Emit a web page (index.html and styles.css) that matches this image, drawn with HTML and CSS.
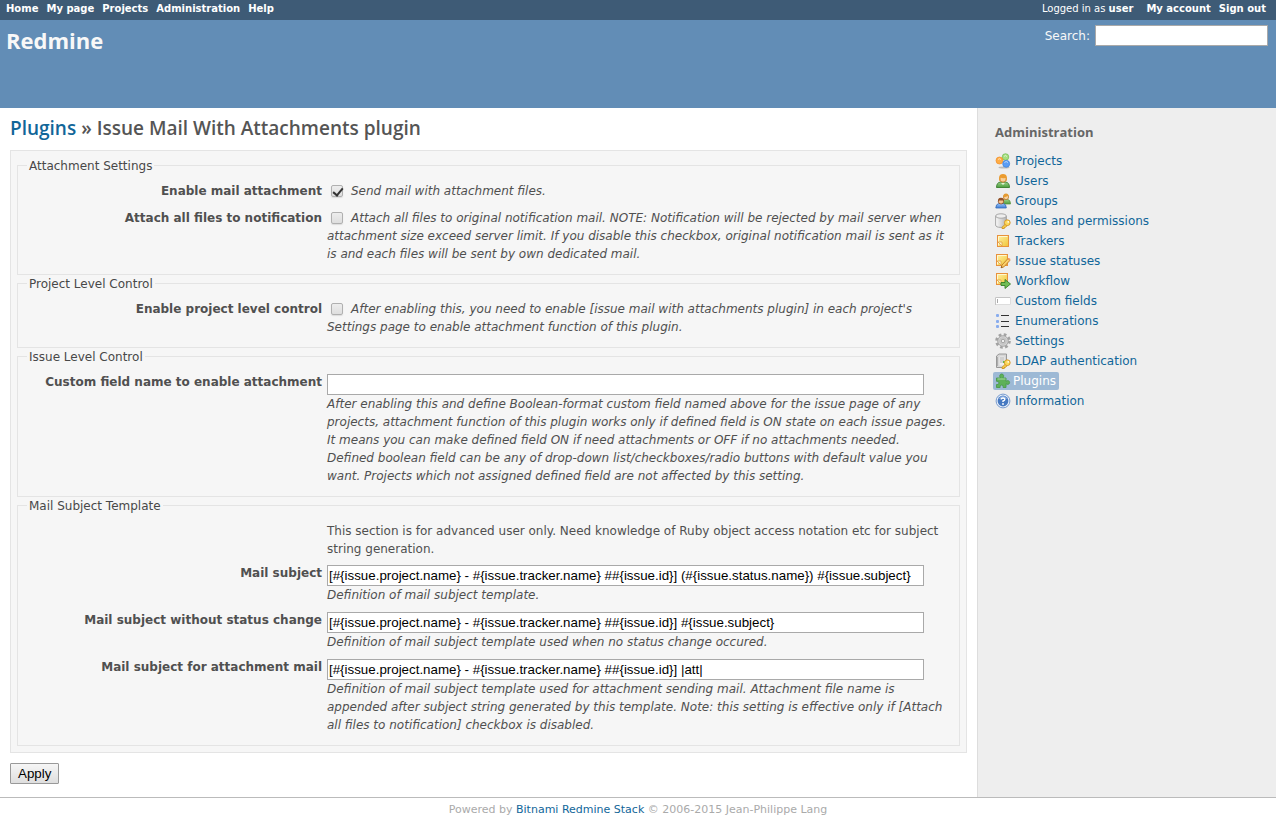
FILE: index.html
```html
<!DOCTYPE html>
<html lang="en">
<head>
<meta charset="utf-8">
<title>Issue Mail With Attachments plugin - Redmine</title>
<link rel="stylesheet" href="styles.css">
</head>
<body>
<nav class="top-menu">
  <ul class="menu">
    <li><a href="#">Home</a></li>
    <li><a href="#">My page</a></li>
    <li><a href="#">Projects</a></li>
    <li><a href="#">Administration</a></li>
    <li><a href="#">Help</a></li>
  </ul>
  <div class="account">
    <span class="logged">Logged in as <a href="#">user</a></span>
    <ul class="menu">
      <li><a href="#">My account</a></li>
      <li><a href="#">Sign out</a></li>
    </ul>
  </div>
</nav>
<header class="header">
  <h1>Redmine</h1>
  <form class="search">
    <label for="q">Search:</label>
    <input type="text" id="q">
  </form>
</header>
<div class="main">
  <main class="content">
    <h2><a href="#">Plugins</a> » Issue Mail With Attachments plugin</h2>
    <form>
      <div class="box">
        <fieldset>
          <legend>Attachment Settings</legend>
          <div class="row">
            <label for="enable-mail">Enable mail attachment</label>
            <p class="hint"><input type="checkbox" id="enable-mail" checked>Send mail with attachment files.</p>
          </div>
          <div class="row">
            <label for="attach-all">Attach all files to notification</label>
            <p class="hint"><input type="checkbox" id="attach-all">Attach all files to original notification mail. NOTE: Notification will be rejected by mail server when attachment size exceed server limit. If you disable this checkbox, original notification mail is sent as it is and each files will be sent by own dedicated mail.</p>
          </div>
        </fieldset>
        <fieldset>
          <legend>Project Level Control</legend>
          <div class="row">
            <label for="project-level">Enable project level control</label>
            <p class="hint"><input type="checkbox" id="project-level">After enabling this, you need to enable [issue mail with attachments plugin] in each project's Settings page to enable attachment function of this plugin.</p>
          </div>
        </fieldset>
        <fieldset>
          <legend>Issue Level Control</legend>
          <div class="row">
            <label for="field-name">Custom field name to enable attachment</label>
            <div class="field">
              <input type="text" id="field-name">
              <p class="hint">After enabling this and define Boolean-format custom field named above for the issue page of any projects, attachment function of this plugin works only if defined field is ON state on each issue pages. It means you can make defined field ON if need attachments or OFF if no attachments needed. Defined boolean field can be any of drop-down list/checkboxes/radio buttons with default value you want. Projects which not assigned defined field are not affected by this setting.</p>
            </div>
          </div>
        </fieldset>
        <fieldset>
          <legend>Mail Subject Template</legend>
          <div class="row">
            <p class="note">This section is for advanced user only. Need knowledge of Ruby object access notation etc for subject string generation.</p>
          </div>
          <div class="row">
            <label for="subject">Mail subject</label>
            <div class="field">
              <input type="text" id="subject" value="[#{issue.project.name} - #{issue.tracker.name} ##{issue.id}] (#{issue.status.name}) #{issue.subject}">
              <p class="hint">Definition of mail subject template.</p>
            </div>
          </div>
          <div class="row">
            <label for="subject-plain">Mail subject without status change</label>
            <div class="field">
              <input type="text" id="subject-plain" value="[#{issue.project.name} - #{issue.tracker.name} ##{issue.id}] #{issue.subject}">
              <p class="hint">Definition of mail subject template used when no status change occured.</p>
            </div>
          </div>
          <div class="row">
            <label for="subject-att">Mail subject for attachment mail</label>
            <div class="field">
              <input type="text" id="subject-att" value="[#{issue.project.name} - #{issue.tracker.name} ##{issue.id}] |att|">
              <p class="hint">Definition of mail subject template used for attachment sending mail. Attachment file name is appended after subject string generated by this template. Note: this setting is effective only if [Attach all files to notification] checkbox is disabled.</p>
            </div>
          </div>
        </fieldset>
      </div>
      <button type="submit" class="apply">Apply</button>
    </form>
  </main>
  <aside class="sidebar">
    <svg width="0" height="0" class="defs" aria-hidden="true">
      <defs>
        <linearGradient id="gold" x1="0" y1="0" x2="1" y2="1"><stop offset="0" stop-color="#fff3a8"/><stop offset="1" stop-color="#f0c436"/></linearGradient>
        <linearGradient id="leaf" x1="0" y1="0" x2="0" y2="1"><stop offset="0" stop-color="#9bd08a"/><stop offset="1" stop-color="#4c9e3c"/></linearGradient>
        <linearGradient id="steel" x1="0" y1="0" x2="1" y2="0"><stop offset="0" stop-color="#fafafa"/><stop offset="1" stop-color="#b4b4b4"/></linearGradient>
        <linearGradient id="sky" x1="0" y1="0" x2="0" y2="1"><stop offset="0" stop-color="#9cc4f4"/><stop offset="1" stop-color="#3c7edc"/></linearGradient>
        <g id="note"><rect x="2.500" y="2.500" width="11" height="11" fill="url(#gold)" stroke="#e8923c"/><path d="M3.500 12.500v-9h9" fill="none" stroke="#fff8d0"/><path d="M3 9h4v4z" fill="#fff6cc" stroke="#e0a040" stroke-width=".8"/></g>
        <g id="key"><path d="M10.300 11.200 7 14.300v1.200h2.300v-1.200h1.200l1.800-1.900" fill="#fbd64c" stroke="#c98718" stroke-width=".8"/><circle cx="12.300" cy="9.700" r="2.900" fill="#fcd95c" stroke="#d08c20" stroke-width=".8"/><circle cx="13.200" cy="8.900" r=".8" fill="#fff"/></g>
      </defs>
    </svg>
    <h3>Administration</h3>
    <ul class="admin-menu">
      <li><a href="#"><svg viewBox="0 0 16 16"><ellipse cx="9" cy="14.500" rx="5.500" ry="1" fill="#bbb"/><circle cx="10.500" cy="4" r="3.300" fill="#a6df80" stroke="#72bd51" stroke-width=".7"/><circle cx="4.500" cy="7.500" r="3.500" fill="#ffac44" stroke="#ef8e28" stroke-width=".7"/><circle cx="11.200" cy="10.800" r="3.500" fill="#5b9df4" stroke="#397fdd" stroke-width=".7"/><path d="M9 3.500q1-2 3 0M3 6.500q1-1.500 3 0M9.500 9.500q1.500-2 3.500 0" stroke="#fff" stroke-opacity=".6" fill="none"/></svg>Projects</a></li>
      <li><a href="#"><svg viewBox="0 0 16 16"><path d="M1.500 14.500q0-5 4-5.500h5q4 .5 4 5.500z" fill="url(#leaf)" stroke="#397d2e" stroke-width=".9"/><circle cx="8" cy="5.800" r="3.400" fill="#f8cf9a" stroke="#c47c2b" stroke-width=".9"/><path d="M4.200 8V4Q4.500 1 8 1t3.800 3v4l-1.100-1V5Q7 5.500 5.500 4.500V7z" fill="#eb9b2e"/><path d="M6 10l2 2 2-2" fill="#e1f1d4"/></svg>Users</a></li>
      <li><a href="#"><svg viewBox="0 0 16 16"><path d="M6.500 10q0-3 3-3.500h3.500q2.500.5 2.500 4.500H6.500z" fill="url(#leaf)" stroke="#568e3c" stroke-width=".7"/><circle cx="11" cy="4" r="2.600" fill="#f9d2a1" stroke="#be7927" stroke-width=".8"/><path d="M8.300 4.500Q8 .6 11 .6t2.800 3.900L13 3Q10 4 8.300 4.500z" fill="#e59b32"/><path d="M.8 15q0-4 3-4.500h4.500q3 .5 3 4.500z" fill="url(#sky)" stroke="#386cb5" stroke-width=".8"/><circle cx="6" cy="8.300" r="2.700" fill="#f5c390" stroke="#8b4d25" stroke-width=".8"/><path d="M3 9Q2.500 4.700 6 4.700T9 9L8 7.500H4z" fill="#935229"/></svg>Groups</a></li>
      <li><a href="#"><svg viewBox="0 0 16 16"><path d="M.6 3v9q0 2.400 5.400 2.400t5.400-2.400V3" fill="url(#steel)" stroke="#a0a0a0" stroke-width=".9"/><ellipse cx="6" cy="3" rx="5.400" ry="2.200" fill="#eee" stroke="#a0a0a0" stroke-width=".9"/><use href="#key"/></svg>Roles and permissions</a></li>
      <li><a href="#"><svg viewBox="0 0 16 16"><use href="#note"/></svg>Trackers</a></li>
      <li><a href="#"><svg viewBox="0 0 16 16"><g transform="translate(-1 -1)"><use href="#note"/></g><path d="M6 14.800 7 12l6-6.500 2 1.800-6 6.500z" fill="#fbd16c" stroke="#bd7821" stroke-width=".9"/><path d="M6 14.800l.6-1.600 1.200 1z" fill="#754617"/><path d="M12.500 6l2 1.800 1-1.200q0-1.800-2-1.700z" fill="#ef9a63"/></svg>Issue statuses</a></li>
      <li><a href="#"><svg viewBox="0 0 16 16"><g transform="translate(-1 -2)"><use href="#note"/></g><path d="M6 9.500h4v-3l5.500 4.500-5.500 4.500v-3H6z" fill="#72bd55" stroke="#367e27" stroke-width=".9"/></svg>Workflow</a></li>
      <li><a href="#"><svg viewBox="0 0 16 16"><path d="M0 4h16v8H0z" fill="#fff"/><path d="M.5 12V4.500h15" fill="none" stroke="#c4c4c4"/><path d="M1 11.500h14.500V5" fill="none" stroke="#ddd"/><path d="M2.500 6v4" stroke="#aaa"/></svg>Custom fields</a></li>
      <li><a href="#"><svg viewBox="0 0 16 16"><g fill="#88acee"><rect x="1" y="1" width="3" height="3" rx="1"/><rect x="1" y="7" width="3" height="3" rx="1"/><rect x="1" y="12" width="3" height="3" rx="1"/></g><path d="M6 2.500h8M6 8.500h8M6 13.500h8" stroke="#333"/></svg>Enumerations</a></li>
      <li><a href="#"><svg viewBox="0 0 16 16"><circle cx="8" cy="8" r="6.500" fill="none" stroke="#a2a2a2" stroke-width="2.600" stroke-dasharray="2.700 2.400"/><circle cx="8" cy="8" r="5.300" fill="#d2d2d2" stroke="#a0a0a0" stroke-width=".9"/><circle cx="8" cy="8" r="3.300" fill="none" stroke="#bbb" stroke-width=".8"/><circle cx="8" cy="8" r="1.800" fill="#eee" stroke="#8f8f8f" stroke-width=".8"/></svg>Settings</a></li>
      <li><a href="#"><svg viewBox="0 0 16 16"><path d="M1.500 3 4 1h7.500v12l-2 1.500h-8z" fill="#d6d6d6" stroke="#909090" stroke-width=".9"/><path d="M4.500 3.500h5v9h-5z" fill="#eee"/><path d="M5 5h4M5 7h4M5 9h3M2.500 4v9" stroke="#a2a2a2" stroke-width=".8"/><rect x="8" y="8" width="2" height="2" fill="#5eb750"/><use href="#key"/></svg>LDAP authentication</a></li>
      <li><a href="#" class="selected"><svg viewBox="0 0 16 16"><path d="M1.500 5h4q-1-1.300-.7-2.600Q5.300 1 6.700 1t1.900 1.400Q8.900 3.700 7.900 5H11v3.300q1.200-.9 2.300-.6 1.300.4 1.300 1.800t-1.300 1.800q-1.100.3-2.300-.6V14.500H8.100q.8-2.500-1.400-2.500t-1.600 2.500H1.500V11.500q2.500.7 2.500-1.500T1.500 8.300z" fill="#5eb158" stroke="#4b9a4c" stroke-width=".9"/><path d="M2.500 6h8" stroke="#a7da9e"/></svg>Plugins</a></li>
      <li><a href="#"><svg viewBox="0 0 16 16"><circle cx="8" cy="8" r="6.900" fill="#e9f0fa" stroke="#6b91c8" stroke-width=".9"/><circle cx="8" cy="8" r="5.400" fill="#4679c1"/><path d="M4 6q1-3 4-3t4 3" fill="#86abdf"/><path d="M6.200 6.500Q6.300 5 8 5t1.800 1.400Q9.800 7.300 8 8v1" fill="none" stroke="#fff" stroke-width="1.400"/><circle cx="8" cy="11" r=".9" fill="#fff"/></svg>Information</a></li>
    </ul>
  </aside>
</div>
<footer class="footer">Powered by <a href="#">Bitnami Redmine Stack</a> © 2006-2015 Jean-Philippe Lang</footer>
</body>
</html>
```
FILE: styles.css
```css
* {
  box-sizing: border-box;
}

body {
  display: flex;
  flex-direction: column;
  min-height: 100vh;
  margin: 0;
  color: #484848;
  background: #fff;
  font: 12px/18px Verdana, "DejaVu Sans", sans-serif;
}

a {
  color: #169;
  text-decoration: none;
}

a:hover {
  text-decoration: underline;
}

h1,
h2,
h3,
p,
ul {
  margin: 0;
  padding: 0;
}

ul {
  list-style: none;
}

h1,
h2,
h3 {
  font-family: "Trebuchet MS", "Open Sans", sans-serif;
}

.top-menu {
  display: flex;
  justify-content: space-between;
  height: 20px;
  padding: 0 10px 0 6px;
  color: #fff;
  background: #3e5b76;
  font-size: 10px;
}

.top-menu a {
  color: #fff;
  font-weight: bold;
}

.menu {
  display: flex;
  gap: 8px;
}

.account {
  display: flex;
  gap: 13px;
}

.header {
  display: flex;
  align-items: flex-start;
  justify-content: space-between;
  min-height: 88px;
  padding: 5px 8px 20px 6px;
  color: #f8f8f8;
  background: #628db6;
}

h1 {
  font-size: 22px;
  line-height: 30px;
}

.search {
  display: flex;
  align-items: center;
  gap: 5px;
}

input[type="text"] {
  height: 21px;
  padding: 1px;
  color: #000;
  background: #fff;
  border: 1px solid #a9a9a9;
  font-family: "Liberation Sans", Arial, sans-serif;
}

.search input[type="text"] {
  width: 173px;
}

.main {
  display: flex;
  flex: 1;
}

.content {
  flex: 1;
  padding: 8px 10px 11px;
}

h2 {
  margin-bottom: 10px;
  color: #555;
  font-size: 19px;
  font-weight: 600;
  line-height: 24px;
}

.box {
  margin-bottom: 10px;
  padding: 6px;
  color: #505050;
  background: #f6f6f6;
  border: 1px solid #e4e4e4;
}

fieldset {
  min-width: 0;
  margin: 0;
  padding: 6px 10px 8px 6px;
  border: 1px solid #e4e4e4;
}

legend {
  margin-left: 3px;
  padding: 2px 2px 0;
  color: #484848;
  line-height: 14px;
}

.row {
  display: grid;
  grid-template-columns: 298px 1fr;
  gap: 5px;
  padding: 3px 0;
}

.row label {
  font-weight: bold;
  text-align: right;
}

.hint {
  min-height: 21px;
  font-style: italic;
}

.note {
  grid-column: 2;
}

.field {
  padding-top: 1px;
}

.field .hint {
  min-height: 19px;
}

.field input[type="text"] {
  display: block;
  width: 96%;
}

input[type="checkbox"] {
  appearance: none;
  position: relative;
  width: 12px;
  height: 12px;
  margin: 0 8px 0 4px;
  vertical-align: -2px;
  background: linear-gradient(#ededed, #dedede);
  border: 1px solid #b0b0b0;
  border-radius: 2px;
  box-shadow: 0 1px 1px #ddd;
}

input[type="checkbox"]:checked::after {
  content: "";
  position: absolute;
  top: 0;
  left: 3px;
  width: 4px;
  height: 8px;
  border: solid #333;
  border-width: 0 2px 2px 0;
  transform: rotate(40deg);
}

.apply {
  display: block;
  height: 21px;
  padding: 0 7px;
  color: #000;
  background: linear-gradient(#f6f6f6, #dedede);
  border: 1px solid #999;
  border-radius: 1px;
  font-family: "Liberation Sans", Arial, sans-serif;
}

.sidebar {
  width: 299px;
  padding: 15px 17px;
  background: #eee;
  border-left: 1px solid #ddd;
}

.defs {
  position: absolute;
}

h3 {
  margin-bottom: 11px;
  color: #666;
  font-size: 13px;
}

.admin-menu a {
  display: flex;
  align-items: center;
  gap: 4px;
  width: fit-content;
  height: 18px;
  margin-bottom: 2px;
}

.admin-menu svg {
  width: 16px;
  height: 16px;
}

.admin-menu .selected {
  gap: 2px;
  margin-left: -2px;
  padding: 0 3px 0 2px;
  color: #fff;
  background: #9db9d5;
  border-radius: 2px;
}

.footer {
  padding: 3px 0 2px;
  color: #aaa;
  border-top: 1px solid #bbb;
  font-size: 11px;
  text-align: center;
}
```
